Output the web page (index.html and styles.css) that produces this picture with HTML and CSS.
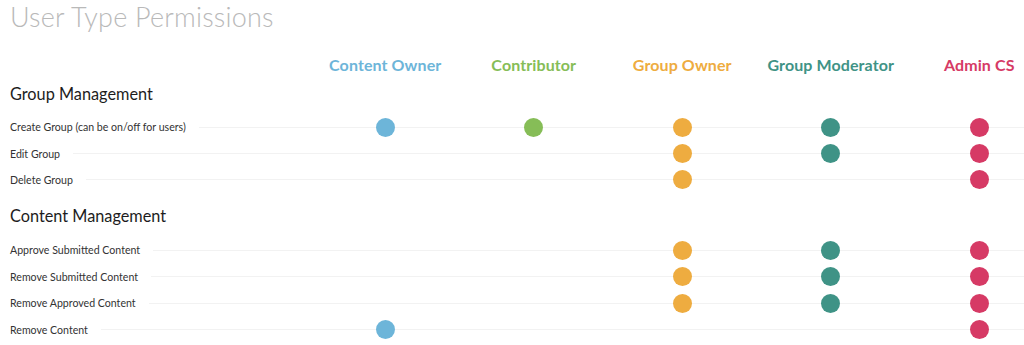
FILE: index.html
```html
<!DOCTYPE html>
<html>
<head>
<meta charset="utf-8">
<link rel="stylesheet" href="styles.css">
</head>
<body>
<div class="page">
  <h1 class="title">User Type Permissions</h1>
  <div class="grid head">
    <span></span>
    <span class="role c-blue">Content Owner</span>
    <span class="role c-green">Contributor</span>
    <span class="role c-orange">Group Owner</span>
    <span class="role c-teal">Group Moderator</span>
    <span class="role c-red">Admin CS</span>
  </div>

  <h2 class="section">Group Management</h2>
  <div class="grid row">
    <span class="label">Create Group (can be on/off for users)</span>
    <span class="cell"><i class="dot bg-blue"></i></span>
    <span class="cell"><i class="dot bg-green"></i></span>
    <span class="cell"><i class="dot bg-orange"></i></span>
    <span class="cell"><i class="dot bg-teal"></i></span>
    <span class="cell"><i class="dot bg-red"></i></span>
  </div>
  <div class="grid row">
    <span class="label">Edit Group</span>
    <span class="cell"></span>
    <span class="cell"></span>
    <span class="cell"><i class="dot bg-orange"></i></span>
    <span class="cell"><i class="dot bg-teal"></i></span>
    <span class="cell"><i class="dot bg-red"></i></span>
  </div>
  <div class="grid row">
    <span class="label">Delete Group</span>
    <span class="cell"></span>
    <span class="cell"></span>
    <span class="cell"><i class="dot bg-orange"></i></span>
    <span class="cell"></span>
    <span class="cell"><i class="dot bg-red"></i></span>
  </div>

  <h2 class="section section-2">Content Management</h2>
  <div class="grid row">
    <span class="label">Approve Submitted Content</span>
    <span class="cell"></span>
    <span class="cell"></span>
    <span class="cell"><i class="dot bg-orange"></i></span>
    <span class="cell"><i class="dot bg-teal"></i></span>
    <span class="cell"><i class="dot bg-red"></i></span>
  </div>
  <div class="grid row">
    <span class="label">Remove Submitted Content</span>
    <span class="cell"></span>
    <span class="cell"></span>
    <span class="cell"><i class="dot bg-orange"></i></span>
    <span class="cell"><i class="dot bg-teal"></i></span>
    <span class="cell"><i class="dot bg-red"></i></span>
  </div>
  <div class="grid row">
    <span class="label">Remove Approved Content</span>
    <span class="cell"></span>
    <span class="cell"></span>
    <span class="cell"><i class="dot bg-orange"></i></span>
    <span class="cell"><i class="dot bg-teal"></i></span>
    <span class="cell"><i class="dot bg-red"></i></span>
  </div>
  <div class="grid row">
    <span class="label">Remove Content</span>
    <span class="cell"><i class="dot bg-blue"></i></span>
    <span class="cell"></span>
    <span class="cell"></span>
    <span class="cell"></span>
    <span class="cell"><i class="dot bg-red"></i></span>
  </div>
</div>
</body>
</html>
```

FILE: styles.css
```css
html, body {
  margin: 0;
  padding: 0;
  background: #fff;
  overflow: hidden;
}
body {
  font-family: Lato, "Liberation Sans", sans-serif;
  color: #222;
}
.page {
  padding: 0 0 0 10px;
  width: 1060px;
}
.title {
  margin: 0;
  font-size: 27px;
  font-weight: 300;
  line-height: 34px;
  color: #b9b9b9;
  letter-spacing: 0.2px;
}
.grid {
  display: grid;
  grid-template-columns: 301px repeat(5, 148.5px);
  align-items: center;
}
.head {
  margin-top: 13px;
  height: 34px;
}
.role {
  justify-self: center;
  font-size: 16px;
  font-weight: 700;
  white-space: nowrap;
  letter-spacing: 0.1px;
}
.c-blue { color: #6db5d9; }
.c-green { color: #86bd57; }
.c-orange { color: #eeac40; }
.c-teal { color: #3f9386; }
.c-red { color: #d63a65; }
.bg-blue { background: #6db5d9; }
.bg-green { background: #86bd57; }
.bg-orange { background: #eeac40; }
.bg-teal { background: #3f9386; }
.bg-red { background: #d63a65; }
.section {
  margin: 0;
  font-size: 16.3px;
  font-weight: 400;
  line-height: 26px;
  height: 33px;
  color: #1d1d1d;
}
.section-2 {
  margin-top: 10px;
  height: 34px;
}
.row {
  height: 26.4px;
  background: linear-gradient(#f2f2f2, #f2f2f2) 0 50% / 100% 1px no-repeat;
}
.label {
  justify-self: start;
  background: #fff;
  padding-right: 13px;
  font-size: 10.6px;
  color: #333;
  white-space: nowrap;
}
.cell {
  display: flex;
  justify-content: center;
}
.dot {
  display: block;
  width: 19px;
  height: 19px;
  border-radius: 50%;
}
```
